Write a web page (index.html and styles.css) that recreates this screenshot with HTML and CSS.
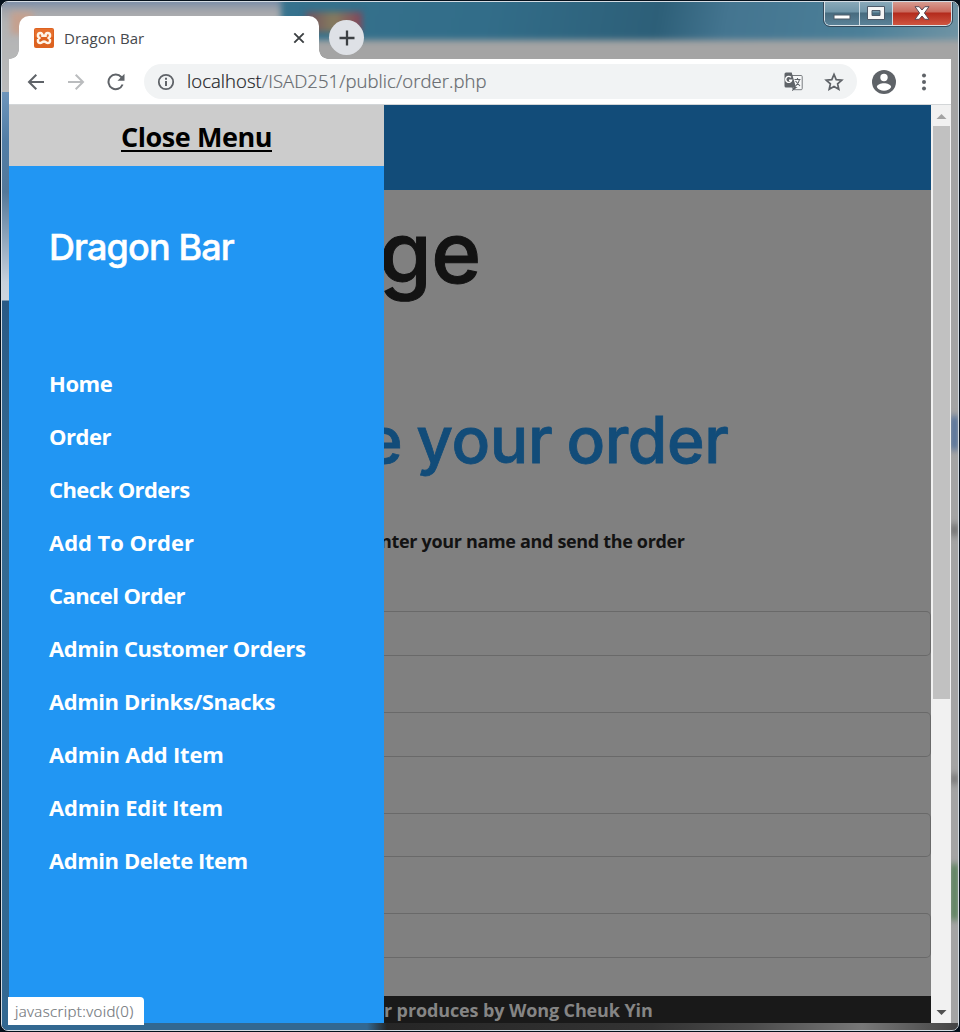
FILE: index.html
```html
<!DOCTYPE html>
<html lang="en">
<head>
<meta charset="utf-8">
<title>Dragon Bar</title>
<link rel="stylesheet" href="styles.css">
</head>
<body>
<div class="window">
  <div class="glass">
    <i class="blur ghost-tab"></i><i class="blur ghost-icon"></i><i class="blur ghost-red"></i>
    <i class="blur teal"></i><i class="blur left-glass"></i><i class="blur spot-blue"></i>
    <i class="blur spot-green"></i><i class="blur spot-a"></i><i class="blur spot-b"></i><i class="blur bottom-glass"></i>
  </div>
  <header class="titlebar">
    <div class="tab">
      <svg class="favicon" width="20" height="20" viewBox="0 0 20 20"><rect width="20" height="20" rx="2" fill="#dd6220"/><path d="M1 1h18v8H1z" fill="#ed7a38" opacity=".6"/><path d="M6.200 5C3.600 5 3.100 8.400 5.200 10 3.100 11.600 3.600 15 6.200 15c1.800 0 2-1.500 3.800-1.500s2 1.500 3.800 1.500c2.600 0 3.100-3.400 1-5 2.100-1.600 1.600-5-1-5-1.500 0-2.300 1.200-2.300 2.700h-3C8.500 6.200 7.700 5 6.200 5z" fill="none" stroke="#fff5e8" stroke-width="2.500"/></svg>
      <span class="tab-title">Dragon Bar</span>
      <svg class="tab-close" width="12" height="12" viewBox="0 0 12 12"><path d="M1.300 1.300l9.400 9.400M10.700 1.300l-9.400 9.400" stroke="#3c4043" stroke-width="1.900"/></svg>
    </div>
    <button class="new-tab"><svg width="16" height="16" viewBox="0 0 16 16"><path d="M8 .5v15M.5 8h15" stroke="#3c4043" stroke-width="2.300"/></svg></button>
    <div class="controls">
      <span class="ctl min"><svg width="18" height="6" viewBox="0 0 18 6"><rect x="1" y="1" width="16" height="4" fill="#fff" stroke="#4d5a69"/></svg></span>
      <span class="ctl max"><svg width="18" height="14" viewBox="0 0 18 14"><path fill-rule="evenodd" d="M.5.5h17v13H.5zM5 4.500v5h8v-5z" fill="#f5f5f5" stroke="#4d5a69"/></svg></span>
      <span class="ctl close"><svg width="16" height="14" viewBox="0 0 16 14"><path d="M1 .7h4.200L8 4l2.800-3.300H15L10.400 7l4.600 6.300h-4.200L8 10l-2.800 3.300H1L5.600 7z" fill="#fff" stroke="#5a4a55"/></svg></span>
    </div>
  </header>
  <div class="toolbar">
    <svg class="nav" width="18" height="18" viewBox="0 0 18 18"><path d="M17 9H2M9.300 1.700L2 9l7.300 7.300" fill="none" stroke="#5f6368" stroke-width="2"/></svg>
    <svg class="nav" width="18" height="18" viewBox="0 0 18 18"><path d="M1 9h15M8.700 1.700L16 9l-7.300 7.300" fill="none" stroke="#babcbe" stroke-width="2"/></svg>
    <svg class="nav" width="18" height="18" viewBox="0 0 18 18"><path d="M15.600 11.500A7.300 7.300 0 1 1 14.300 4L16 5.800" fill="none" stroke="#5f6368" stroke-width="2"/><path d="M17.500.8v7h-7z" fill="#5f6368"/></svg>
    <div class="omnibox">
      <svg width="18" height="18" viewBox="0 0 18 18"><circle cx="9" cy="9" r="7.200" fill="none" stroke="#5f6368" stroke-width="1.800"/><path d="M9 8v5M9 4.800v2" stroke="#5f6368" stroke-width="2"/></svg>
      <span class="url"><b>localhost</b>/ISAD251/public/order.php</span>
      <svg class="translate" width="19" height="19" viewBox="0 0 19 19"><path d="M8 3.500h9.200a1 1 0 0 1 1 1v12.200a1 1 0 0 1-1 1H9.500L7 13" fill="#f7f8f9" stroke="#777a7e"/><path d="M2 .5h5.700L12 15.500H2a1.500 1.500 0 0 1-1.500-1.500V2A1.500 1.500 0 0 1 2 .5z" fill="#5f6368"/><path d="M7 5.400A3 3 0 1 0 7.600 8.200H5" fill="none" stroke="#fff" stroke-width="1.400"/><path d="M10.500 7.500h6M13.500 6v1.500M15.500 7.500c-.5 3-2 5-4 6.500M11.500 9l4.500 5M10 15.500l-1 2.300 3-2.300z" fill="none" stroke="#5f6368" stroke-width="1.100"/></svg>
      <svg width="20" height="20" viewBox="0 0 20 20"><path d="M10 2.400l2.200 5.200 5.600.5-4.200 3.700 1.200 5.500L10 14.400l-4.800 2.900 1.200-5.500-4.200-3.700 5.600-.5z" fill="none" stroke="#5f6368" stroke-width="1.700"/></svg>
    </div>
    <svg class="avatar" width="24" height="24" viewBox="0 0 24 24"><circle cx="12" cy="12" r="12" fill="#5f6368"/><circle cx="12" cy="7.500" r="3.700" fill="#fff"/><path d="M4.800 17c1-5 13.400-5 14.400 0-2.800 5-11.600 5-14.400 0z" fill="#fff"/></svg>
    <svg class="dots" width="6" height="18" viewBox="0 0 6 18"><g fill="#5f6368"><circle cx="3" cy="2.500" r="2"/><circle cx="3" cy="9" r="2"/><circle cx="3" cy="15.500" r="2"/></g></svg>
  </div>
  <div class="viewport">
    <nav class="sidebar">
      <a class="close-menu"><span>Close Menu</span></a>
      <h3>Dragon Bar</h3>
      <ul class="menu">
        <li>Home</li><li>Order</li><li class="tight">Check Orders</li><li class="wide">Add To Order</li><li class="tight">Cancel Order</li>
        <li>Admin Customer Orders</li><li>Admin Drinks/Snacks</li><li class="mid">Admin Add Item</li><li class="mid">Admin Edit Item</li><li>Admin Delete Item</li>
      </ul>
    </nav>
    <main class="page">
      <div class="banner"></div>
      <h1>ge</h1>
      <h2>e your order</h2>
      <p class="hint">nter your name and send the order</p>
      <form class="fields"><div class="field"></div><div class="field"></div><div class="field"></div><div class="field"></div></form>
      <footer>r produces by Wong Cheuk Yin</footer>
    </main>
    <div class="scrollbar">
      <svg width="20" height="21" viewBox="0 0 20 21"><path d="M5.500 14h10l-5-5z" fill="#a3a3a3"/></svg>
      <div class="thumb"></div>
      <svg width="20" height="21" viewBox="0 0 20 21"><path d="M5.500 8h10l-5 5z" fill="#505050"/></svg>
    </div>
  </div>
  <div class="status">javascript:void(0)</div>
</div>
</body>
</html>
```
FILE: styles.css
```css
* { box-sizing: border-box; }
body { margin: 0; background: #06111c; font-family: "Open Sans", "Noto Sans", sans-serif; overflow: hidden; }
.window { position: relative; width: 958px; height: 1030px; margin: 1px 0 0 1px; padding: 0 7px; border: 1px solid #d4dce3; border-radius: 7px; display: flex; flex-direction: column; overflow: hidden; isolation: isolate; }
.glass { position: absolute; inset: 0; z-index: -1; background: #a4a4a4; }
.blur { position: absolute; filter: blur(3px); }
.teal { left: 279px; right: -8px; top: -8px; height: 46px; background: linear-gradient(100deg, #36728d, #326d89 30%, #2d5f78 55%, #447590 65%, #4b7f98 85%, #7295a5); }
.ghost-tab { left: -6px; top: -6px; width: 290px; height: 104px; background: linear-gradient(#6280a8 0, #a3a5aa 14px, #b2b3b4 26px, #bcbcbc); }
.ghost-icon { left: 9px; top: 10px; width: 22px; height: 22px; background: #c5a08e; }
.ghost-red { left: 304px; top: 10px; width: 56px; height: 20px; background: linear-gradient(90deg, #71505f, #857d5e 50%, #83435a); z-index: 1; }
.left-glass { left: 0; top: 90px; width: 7px; height: 940px; filter: none; background: linear-gradient(#6e95bb, #517da5 50px, #547899 100px, #c7d0db 190px, #cdd5de 208px, #2a5a85 209px, #356a91 400px, #326891); }
.spot-blue { right: 0; top: 414px; width: 7px; height: 34px; background: #486a9a; }
.spot-green { right: 0; top: 862px; width: 7px; height: 56px; background: #4f7d51; }
.spot-a { right: 0; top: 522px; width: 7px; height: 12px; background: #6a6a6a; }
.spot-b { right: 0; top: 772px; width: 7px; height: 10px; background: #707070; }
.bottom-glass { left: 0; right: 0; bottom: 0; height: 7px; filter: none; background: linear-gradient(90deg, #326891 365px, #262626 385px, #333 650px, #4b4b4b 750px, #777 860px, #444); }

.titlebar { height: 57px; display: flex; align-items: flex-start; flex: none; }
.tab { width: 300px; height: 43px; margin: 14px 0 0 10px; padding: 0 15px; background: #fff; border-radius: 10px 10px 0 0; display: flex; align-items: center; position: relative; }
.tab::before, .tab::after { content: ""; position: absolute; bottom: 0; width: 9px; height: 9px; }
.tab::before { left: -9px; background: radial-gradient(circle at 0 0, transparent 8.5px, #fff 9px); }
.tab::after { right: -9px; background: radial-gradient(circle at 100% 0, transparent 8.5px, #fff 9px); }
.tab-title { font-size: 15px; color: #45494d; margin-left: 10px; flex: 1; padding-top: 1px; letter-spacing: .05px; }
.tab-close { margin-right: -1px; }
.new-tab { width: 35px; height: 35px; margin: 18px 0 0 10px; padding: 0; border: 0; border-radius: 50%; background: #dee1e6; display: grid; place-items: center; }
.controls { margin: -1px -1px 0 auto; height: 25px; display: flex; border: 1px solid #d8e2e8; border-top: 0; border-radius: 0 0 6px 6px; outline: 1px solid #34495a; overflow: hidden; width: 128px; }
.ctl { display: grid; place-items: center; border-right: 1px solid #cfdce4; background: linear-gradient(#8babbb 0, #7095a8 11px, #476b7f 12px, #5b8298); }
.min { width: 35px; padding-top: 8px; }
.max { width: 33px; }
.close { flex: 1; border: 0; background: linear-gradient(#d8a196 0, #c9695c 11px, #b32a1c 12px, #cf5540); }

.toolbar { height: 46px; flex: none; background: #fff; border-bottom: 1px solid #d3d6d8; display: flex; align-items: center; padding: 0 24px 0 18px; }
.nav { margin-right: 22px; flex: none; }
.omnibox { width: 713px; flex: none; height: 35px; margin-left: -3px; border-radius: 18px; background: #f1f3f4; display: flex; align-items: center; padding: 0 13px; }
.omnibox svg { flex: none; }
.url { flex: 1; margin: -2px 0 0 12px; font-size: 18.5px; color: #63676c; font-weight: 300; letter-spacing: .05px; -webkit-text-stroke: .2px; }
.url b { font-weight: 300; color: #202124; }
.translate { margin-right: 21px; }
.avatar { margin-left: 15px; flex: none; }
.dots { margin-left: 25px; flex: none; }

.viewport { height: 918px; display: flex; flex: none; }
.sidebar { width: 375px; flex: none; background: #2196f3; color: #fff; position: relative; z-index: 1; }
.close-menu { height: 61px; background: #ccc; color: #000; display: flex; justify-content: center; align-items: center; font-weight: 700; font-size: 27px; padding-top: 3px; letter-spacing: -.42px; }
.close-menu span { border-bottom: 2px solid #000; line-height: 27px; }
.sidebar h3 { margin: 58px 0 0 40px; font: 500 36px/46px "Inter", sans-serif; letter-spacing: -.87px; -webkit-text-stroke: .5px; }
.menu { list-style: none; margin: 87px 0 0; padding: 0 0 0 40px; font-size: 22px; font-weight: 700; line-height: 53px; letter-spacing: -.45px; }
.menu .tight { letter-spacing: -.58px; }
.menu .wide { letter-spacing: -.03px; }
.menu .mid { letter-spacing: -.23px; }
.page { flex: 1; min-width: 0; background: #808080; display: flex; flex-direction: column; white-space: nowrap; }
.banner { height: 85px; background: #124c79; flex: none; }
.page h1 { margin: 10px 0 0 -5px; font: 500 85px/106px "Inter", sans-serif; color: #131313; letter-spacing: -.5px; -webkit-text-stroke: 1px; }
.page h2 { margin: 94px 0 0 -19px; font: 500 64px/80px "Inter", sans-serif; color: #124c79; letter-spacing: -.4px; word-spacing: -2.5px; -webkit-text-stroke: .8px; }
.hint { margin: 44px 0 0 -4px; font-size: 18px; font-weight: 700; line-height: 34px; color: #131313; letter-spacing: -.33px; }
.fields { margin-top: 53px; display: grid; gap: 56px; height: 347px; flex: none; }
.field { border: 1px solid #696969; border-left: 0; border-radius: 0 5px 5px 0; }
.page footer { margin-top: auto; height: 27px; background: #191919; color: #858585; font-size: 18px; font-weight: 700; line-height: 28px; letter-spacing: -.12px; }
.scrollbar { width: 20px; flex: none; background: #f1f1f1; display: flex; flex-direction: column; justify-content: space-between; }
.thumb { height: 573px; width: 17px; margin: 0 auto auto 2px; background: #c1c1c1; }
.status { position: absolute; z-index: 2; left: 6px; bottom: 5px; width: 136px; height: 28px; padding-left: 7px; background: #fff; border-radius: 0 4px 0 0; color: #70757a; font-size: 15px; font-weight: 300; line-height: 29px; letter-spacing: .38px; -webkit-text-stroke: .2px; }
```
